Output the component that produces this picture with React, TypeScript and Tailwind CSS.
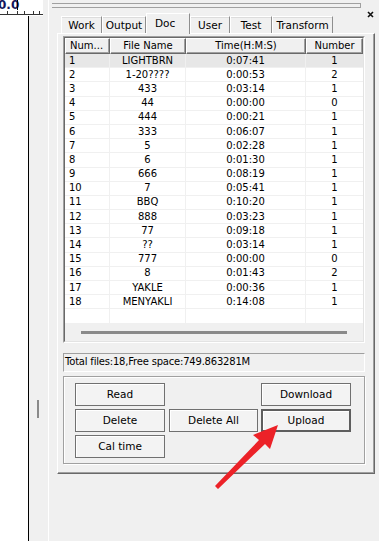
const rows: [string, string, string, string][] = [
  ['1', 'LIGHTBRN', '0:07:41', '1'],
  ['2', '1-20????', '0:00:53', '2'],
  ['3', '433', '0:03:14', '1'],
  ['4', '44', '0:00:00', '0'],
  ['5', '444', '0:00:21', '1'],
  ['6', '333', '0:06:07', '1'],
  ['7', '5', '0:02:28', '1'],
  ['8', '6', '0:01:30', '1'],
  ['9', '666', '0:08:19', '1'],
  ['10', '7', '0:05:41', '1'],
  ['11', 'BBQ', '0:10:20', '1'],
  ['12', '888', '0:03:23', '1'],
  ['13', '77', '0:09:18', '1'],
  ['14', '??', '0:03:14', '1'],
  ['15', '777', '0:00:00', '0'],
  ['16', '8', '0:01:43', '2'],
  ['17', 'YAKLE', '0:00:36', '1'],
  ['18', 'MENYAKLI', '0:14:08', '1'],
  ['', '', '', ''],
]

const tabs = [
  { label: 'Work', w: 'w-[41px]' },
  { label: 'Output', w: 'w-[44px]' },
  { label: 'Doc', w: 'w-[44px]', active: true },
  { label: 'User', w: 'w-[40px]' },
  { label: 'Test', w: 'w-[42px]' },
  { label: 'Transform', w: 'w-[61px]' },
]

function Btn({ label, def }: { label: string; def?: boolean }) {
  return (
    <div
      className={
        'h-[23px] flex items-center justify-center bg-[#f3f3f3] shadow-[inset_1px_1px_0_#ffffff] text-[10.5px] ' +
        (def ? 'border-2 border-[#5e5e5e]' : 'border border-[#707070]')
      }
    >
      {label}
    </div>
  )
}

export default function App() {
  return (
    <div className="relative w-[379px] h-[541px] bg-[#f0f0f0] flex overflow-hidden font-['DejaVu_Sans',sans-serif] text-[10px] text-black leading-none">
      {/* left canvas + ruler */}
      <div className="w-[48px] flex flex-col">
        <div className="h-[16px] flex">
          <div className="relative w-[43px] bg-white overflow-hidden">
            <span className="block -ml-[2px] font-bold text-[12px] leading-[11px] text-[#15155c]">0.0</span>
            <svg className="absolute left-0 top-0" width="43" height="16">
              <line x1="17.5" y1="0" x2="17.5" y2="10" stroke="#000" />
              <line x1="0" y1="14.5" x2="43" y2="14.5" stroke="#333" />
              {[7, 17, 24, 33, 39].map((x) => (
                <line key={x} x1={x + 0.5} y1="11" x2={x + 0.5} y2="14" stroke="#333" />
              ))}
            </svg>
          </div>
          <div className="flex-1" />
        </div>
        <div className="flex-1 flex">
          <div className="w-[28px] bg-white" />
          <div className="w-[1px] bg-black" />
          <div className="flex-1">
            <div className="mt-[384px] ml-[8px] w-[2px] h-[18px] bg-[#8a8a8a]" />
          </div>
        </div>
      </div>
      <div className="w-[1px] bg-white" />

      {/* right panel */}
      <div className="flex-1 flex flex-col">
        <div className="h-[13px] flex items-start">
          <div className="ml-[3px] mt-[3px] w-[309px] h-[5px] border-t border-b border-r border-[#a0a0a0]" />
          <svg className="ml-[6px] mt-[11px] shrink-0" width="7" height="7" viewBox="0 0 7 7">
            <path d="M1 1L6 6M6 1L1 6" stroke="#111" strokeWidth="1.6" />
          </svg>
        </div>

        {/* tabs */}
        <div className="h-[20px] flex items-end pl-[12px] relative z-10">
          {tabs.map((t) =>
            t.active ? (
              <div
                key={t.label}
                className={t.w + ' h-[21px] -mb-[1px] bg-[#f0f0f0] border-t border-l border-white border-r border-r-[#8e8e8e] flex pt-[4px] pl-[8px] text-[10.5px]'}
              >
                {t.label}
              </div>
            ) : (
              <div
                key={t.label}
                className={t.w + ' h-[17px] bg-[#f0f0f0] border-t border-l border-white border-r border-r-[#8e8e8e] shadow-[inset_0_1px_0_#dcdcdc] flex items-center justify-center text-[10.5px]'}
              >
                {t.label}
              </div>
            ),
          )}
        </div>

        <div className="ml-[8px] w-[318px] h-[441px] border-t border-l border-white border-r border-b border-r-[#696969] border-b-[#696969] shadow-[inset_-1px_-1px_0_#a0a0a0] pl-[5px] pt-[2px]">
          {/* list view */}
          <div className="w-[302px] border border-t-[#a0a0a0] border-l-[#a0a0a0] border-r-white border-b-white">
            <div className="border border-t-[#696969] border-l-[#696969] border-r-[#e3e3e3] border-b-[#e3e3e3] bg-white">
              <div className="h-[16px] flex bg-[#f0f0f0]">
                {[
                  ['Num...', 'w-[45px] justify-start pl-[4px]'],
                  ['File Name', 'w-[76px] justify-center'],
                  ['Time(H:M:S)', 'w-[120px] justify-center'],
                  ['Number', 'w-[57px] justify-center'],
                ].map(([l, c]) => (
                  <div
                    key={l}
                    className={c + ' flex items-center border-t border-l border-white border-r border-b border-r-[#696969] border-b-[#696969] shadow-[inset_-1px_-1px_0_#a0a0a0]'}
                  >
                    {l}
                  </div>
                ))}
              </div>
              {rows.map((r, i) => (
                <div
                  key={i}
                  className={'h-[14.2px] flex border-b border-[#f0f0f0] ' + (i === 0 ? 'bg-[#e7e7e7]' : '')}
                >
                  <div className="w-[45px] pl-[4px] flex items-center border-r border-[#f0f0f0]">{r[0]}</div>
                  <div className="w-[76px] flex items-center justify-center border-r border-[#f0f0f0]">{r[1]}</div>
                  <div className="w-[120px] flex items-center justify-center border-r border-[#f0f0f0]">{r[2]}</div>
                  <div className="w-[57px] flex items-center justify-center">{r[3]}</div>
                </div>
              ))}
              <div className="h-[17px] bg-[#f0f0f0] flex items-center px-[16px]">
                <div className="flex-1 h-[3px] bg-[#8a8a8a]" />
              </div>
            </div>
          </div>

          {/* status */}
          <div className="mt-[10px] w-[302px] h-[19px] border border-t-[#a0a0a0] border-l-[#a0a0a0] border-r-white border-b-white flex items-center pl-[1px] tracking-[-0.2px]">
            Total files:18,Free space:749.863281M
          </div>

          {/* buttons group */}
          <div className="mt-[4px] w-[302px] h-[88px] border border-[#a0a0a0] shadow-[inset_1px_1px_0_#ffffff,1px_1px_0_#ffffff] pl-[11px] pt-[6px] flex flex-col gap-[3px]">
            <div className="flex">
              <div className="w-[90px]"><Btn label="Read" /></div>
              <div className="w-[89px] ml-[4px]" />
              <div className="w-[90px] ml-[3px]"><Btn label="Download" /></div>
            </div>
            <div className="flex">
              <div className="w-[90px]"><Btn label="Delete" /></div>
              <div className="w-[89px] ml-[4px]"><Btn label="Delete All" /></div>
              <div className="w-[90px] ml-[3px]"><Btn label="Upload" def /></div>
            </div>
            <div className="flex">
              <div className="w-[90px]"><Btn label="Cal time" /></div>
            </div>
          </div>
        </div>
      </div>

      {/* red annotation arrow */}
      <svg className="absolute left-0 top-0 pointer-events-none" width="379" height="541">
        <polygon
          points="278,425 270,449 265,444 218,489 215,486 259,440 253,435"
          fill="#ec2228"
        />
      </svg>
    </div>
  )
}
